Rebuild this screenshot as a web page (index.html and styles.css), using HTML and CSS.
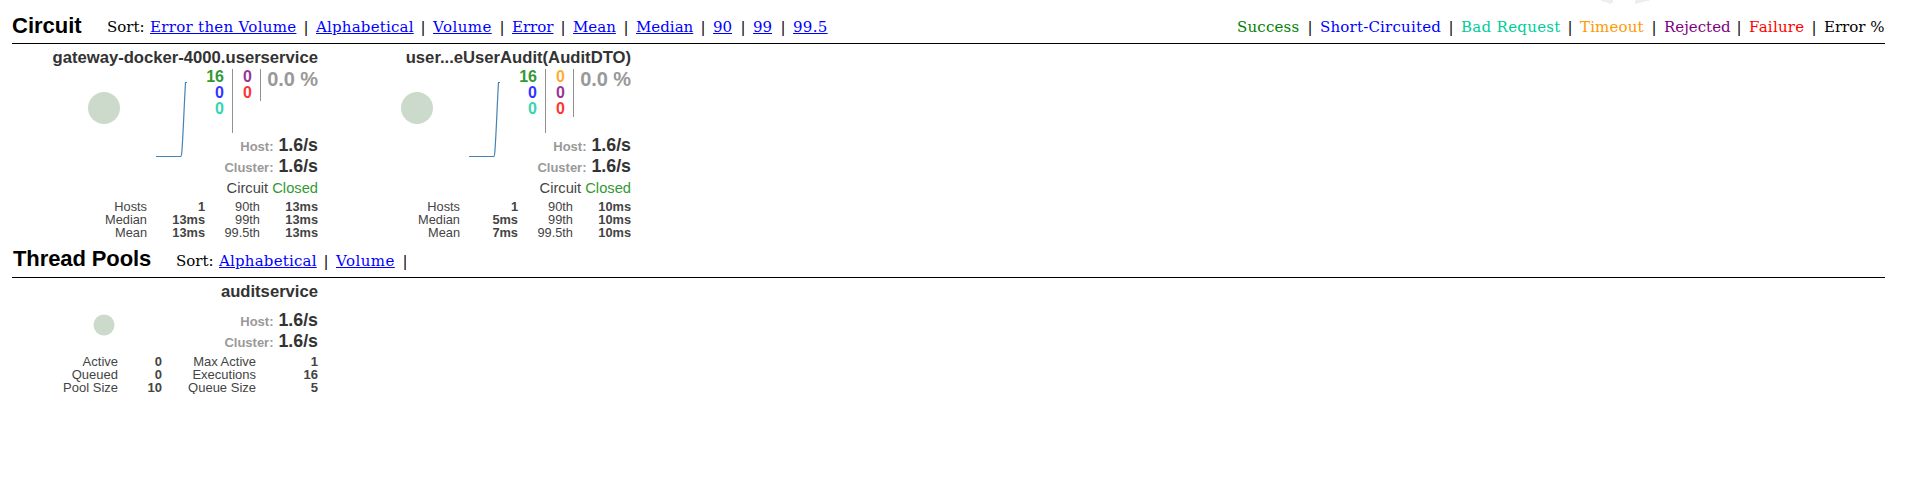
FILE: index.html
```html
<!DOCTYPE html>
<html lang="en">
<head>
<meta charset="utf-8">
<title>Hystrix Dashboard</title>
<link rel="stylesheet" href="styles.css">
</head>
<body>
<svg class="logo-edge" width="50" height="5" viewBox="0 0 50 5"><path d="M2 0v1M4 0v2M6 0v2M8 0v3M10 0v4M12 0v3M36 0v4M38 0v3M40 0v3M42 0v2M44 0v2M46 0v1M48 0v1" stroke="#ddd"/></svg>
<header class="bar">
  <h2 class="circuit-title">Circuit</h2>
  <nav class="items">
    <span class="sort">Sort:</span>
    <a class="w146" href="#">Error then Volume</a><i>|</i>
    <a class="w97" href="#">Alphabetical</a><i>|</i>
    <a class="w59" href="#">Volume</a><i>|</i>
    <a class="w41" href="#">Error</a><i>|</i>
    <a class="w43" href="#">Mean</a><i>|</i>
    <a class="w57" href="#">Median</a><i>|</i>
    <a class="w20" href="#">90</a><i>|</i>
    <a class="w20" href="#">99</a><i>|</i>
    <a class="w35" href="#">99.5</a>
  </nav>
  <div class="items legend">
    <span class="w63 success">Success</span><i>|</i>
    <span class="w121 short">Short-Circuited</span><i>|</i>
    <span class="w99 bad">Bad Request</span><i>|</i>
    <span class="w64 timeout">Timeout</span><i>|</i>
    <span class="w65 rejected">Rejected</span><i>|</i>
    <span class="w55 failure">Failure</span><i>|</i>
    <span class="w61">Error %</span>
  </div>
</header>
<main class="monitors">
  <section class="monitor">
    <h3>gateway-docker-4000.userservice</h3>
    <div class="top">
      <svg class="chart" width="182" height="100" viewBox="0 0 182 100"><circle cx="92" cy="40" r="16" fill="#ccdacc"/><path d="M144 88.5H169Q169.500 88.500 170 82C171.500 60 172 40 173.500 14.500H175" fill="none" stroke="#4682b4" stroke-width="1.2"/></svg>
      <div class="counts first"><b class="success">16</b><b class="short">0</b><b class="bad">0</b></div>
      <div class="counts second two"><b class="rejected">0</b><b class="failure">0</b></div>
      <div class="percent">0.0 %</div>
    </div>
    <div class="rate"><span>Host:</span> 1.6/s</div>
    <div class="rate"><span>Cluster:</span> 1.6/s</div>
    <div class="state">Circuit <span>Closed</span></div>
    <div class="table">
      <span>Hosts</span><b>1</b><span>90th</span><b>13ms</b>
      <span>Median</span><b>13ms</b><span>99th</span><b>13ms</b>
      <span>Mean</span><b>13ms</b><span>99.5th</span><b>13ms</b>
    </div>
  </section>
  <section class="monitor">
    <h3>user...eUserAudit(AuditDTO)</h3>
    <div class="top">
      <svg class="chart" width="182" height="100" viewBox="0 0 182 100"><circle cx="92" cy="40" r="16" fill="#ccdacc"/><path d="M144 88.5H169Q169.500 88.500 170 82C171.500 60 172 40 173.500 14.500H175" fill="none" stroke="#4682b4" stroke-width="1.2"/></svg>
      <div class="counts first"><b class="success">16</b><b class="short">0</b><b class="bad">0</b></div>
      <div class="counts second"><b class="timeout">0</b><b class="rejected">0</b><b class="failure">0</b></div>
      <div class="percent">0.0 %</div>
    </div>
    <div class="rate"><span>Host:</span> 1.6/s</div>
    <div class="rate"><span>Cluster:</span> 1.6/s</div>
    <div class="state">Circuit <span>Closed</span></div>
    <div class="table">
      <span>Hosts</span><b>1</b><span>90th</span><b>10ms</b>
      <span>Median</span><b>5ms</b><span>99th</span><b>10ms</b>
      <span>Mean</span><b>7ms</b><span>99.5th</span><b>10ms</b>
    </div>
  </section>
</main>
<header class="bar pools-bar">
  <h2 class="pools-title">Thread Pools</h2>
  <nav class="items">
    <span class="sort">Sort:</span>
    <a class="w97" href="#">Alphabetical</a><i>|</i>
    <a class="w59" href="#">Volume</a><i>|</i>
  </nav>
</header>
<section class="monitor pool">
  <h3>auditservice</h3>
  <div class="pool-top">
    <svg width="182" height="50" viewBox="0 0 182 50"><circle cx="92" cy="23" r="10.500" fill="#ccdacc"/></svg>
    <div>
      <div class="rate"><span>Host:</span> 1.6/s</div>
      <div class="rate"><span>Cluster:</span> 1.6/s</div>
    </div>
  </div>
  <div class="table">
    <span>Active</span><b>0</b><span>Max Active</span><b>1</b>
    <span>Queued</span><b>0</b><span>Executions</span><b>16</b>
    <span>Pool Size</span><b>10</b><span>Queue Size</span><b>5</b>
  </div>
</section>
</body>
</html>
```
FILE: styles.css
```css
* { box-sizing: border-box; }
body {
  margin: 0;
  padding: 8px 20px 0 12px;
  background: #fff;
  font-family: "Liberation Sans", Arial, sans-serif;
  overflow: hidden;
}
.logo-edge { position: absolute; left: 1600px; top: 0; }
h2, h3 { margin: 0; }
.bar {
  display: flex;
  height: 36px;
  border-bottom: 1px solid #000;
}
.bar h2 { font-size: 22px; line-height: 35px; white-space: nowrap; }
.bar .circuit-title { width: 95px; }
.bar .pools-title { width: 164px; padding-left: 1px; line-height: 33px; letter-spacing: -.1px; }
.items {
  display: flex;
  font: 15px/38px "DejaVu Serif", serif;
  white-space: nowrap;
}
.items i { width: 20px; text-align: center; font-style: normal; }
.items a { color: #00f; text-underline-offset: 1px; }
.sort { width: 43px; }
.legend { margin-left: auto; }
.w20 { width: 20px; }
.w35 { width: 35px; letter-spacing: .3px; }
.w41 { width: 41px; }
.w43 { width: 43px; }
.w55 { width: 55px; letter-spacing: .25px; }
.w57 { width: 57px; }
.w59 { width: 59px; letter-spacing: .45px; }
.w61 { width: 61px; }
.w63 { width: 63px; letter-spacing: .2px; }
.w64 { width: 64px; letter-spacing: .15px; }
.w65 { width: 65px; }
.w97 { width: 97px; letter-spacing: .2px; }
.w99 { width: 99px; letter-spacing: .3px; }
.w121 { width: 121px; letter-spacing: .2px; }
.w146 { width: 146px; letter-spacing: .3px; }
.success { color: green; }
.short { color: blue; }
.bad { color: #0c9; }
.timeout { color: #f90; }
.rejected { color: purple; }
.failure { color: red; }

.monitors { display: flex; gap: 7px; height: 198px; }
.monitor { width: 306px; color: #333; text-align: right; }
.monitor h3 { height: 23px; font-size: 16.650px; line-height: 28px; white-space: nowrap; }
.top { display: flex; height: 68px; padding-top: 1px; }
.chart { flex: none; overflow: visible; }
.counts { display: flex; flex-direction: column; margin-top: 1px; border-right: 1px solid #777; font-size: 16px; line-height: 16px; padding-right: 8px; opacity: .8; }
.first { width: 39px; height: 64px; }
.second { width: 28px; height: 48px; }
.two { height: 32px; }
.percent { flex: 1; color: #999; font-size: 20px; font-weight: bold; line-height: 23px; white-space: nowrap; letter-spacing: -.1px; }
.rate { height: 21px; font-size: 17.800px; line-height: 21px; font-weight: bold; }
.rate span { font-size: 13px; color: #999; }
.state { height: 23px; font-size: 14.700px; line-height: 23px; color: #444; }
.state span { color: #393; }
.table {
  display: grid;
  grid-template-columns: 135px 58px 55px 58px;
  font-size: 12.800px;
  line-height: 13px;
  color: #444;
}
.monitor.pool h3 { height: 24px; }
.pool-top { display: flex; justify-content: space-between; height: 53px; }
.pool-top > div { padding-top: 8px; }
.pool .table { grid-template-columns: 106px 44px 94px 62px; font-size: 13px; }
```
